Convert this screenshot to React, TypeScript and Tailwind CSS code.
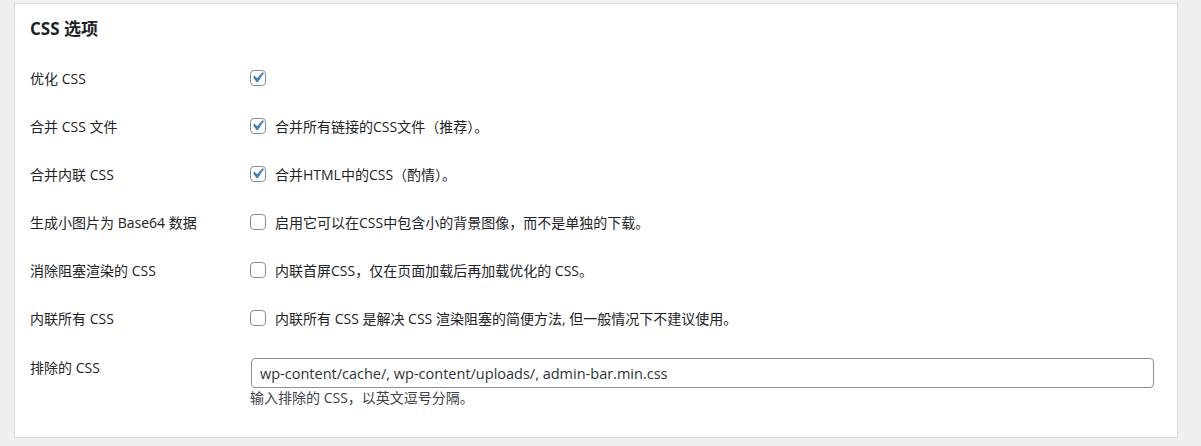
import React from 'react';

const font = { fontFamily: '"Open Sans", "Noto Sans CJK SC", sans-serif' };

interface Row {
  label: string;
  checked: boolean;
  text?: string;
}

const rows: Row[] = [
  { label: '优化 CSS', checked: true },
  { label: '合并 CSS 文件', checked: true, text: '合并所有链接的CSS文件（推荐）。' },
  { label: '合并内联 CSS', checked: true, text: '合并HTML中的CSS（酌情）。' },
  { label: '生成小图片为 Base64 数据', checked: false, text: '启用它可以在CSS中包含小的背景图像，而不是单独的下载。' },
  { label: '消除阻塞渲染的 CSS', checked: false, text: '内联首屏CSS，仅在页面加载后再加载优化的 CSS。' },
  { label: '内联所有 CSS', checked: false, text: '内联所有 CSS 是解决 CSS 渲染阻塞的简便方法, 但一般情况下不建议使用。' },
];

function Checkbox({ checked }: { checked: boolean }) {
  return (
    <span className="relative w-4 h-4 shrink-0 rounded-[4px] border border-[#8c8f94] bg-white">
      {checked && (
        <svg viewBox="0 0 20 20" className="absolute w-[21px] h-[21px] -top-[4px] -left-[4px]">
          <path d="M14.83 4.89l1.34.94-5.81 8.38H9.02L5.78 9.67l1.34-1.25 2.57 2.4z" fill="#3582c4" />
        </svg>
      )}
    </span>
  );
}

export default function App() {
  return (
    <div className="w-[1201px] h-[446px] bg-[#f0f0f1] pt-[3px] pl-[14px] text-[#1d2327] overflow-hidden" style={font}>
      <div className="w-[1164px] bg-white border border-[#dcdcde] pl-[15px] pb-[30px]">
        <h2 className="text-[17px] font-bold leading-[20px] pt-[15px] pb-[15px]">CSS 选项</h2>
        {rows.map(r => (
          <div key={r.label} className="h-12 flex items-center text-[14px]">
            <div className="w-[220px] shrink-0">{r.label}</div>
            <div className="flex items-center gap-[9px]">
              <Checkbox checked={r.checked} />
              {r.text && <span>{r.text}</span>}
            </div>
          </div>
        ))}
        <div className="flex pt-[16px] text-[14px]">
          <div className="w-[220px] shrink-0 leading-[20px]">排除的 CSS</div>
          <div className="flex flex-col">
            <input
              readOnly
              value="wp-content/cache/, wp-content/uploads/, admin-bar.min.css"
              className="w-[903px] h-[30px] ml-[1px] px-[8px] text-[14.5px] text-[#2c3338] border border-[#8c8f94] rounded-[4px] outline-none"
              style={font}
            />
            <div className="leading-[18px] mt-[1px] text-[#3c434a]">输入排除的 CSS，以英文逗号分隔。</div>
          </div>
        </div>
      </div>
    </div>
  );
}
